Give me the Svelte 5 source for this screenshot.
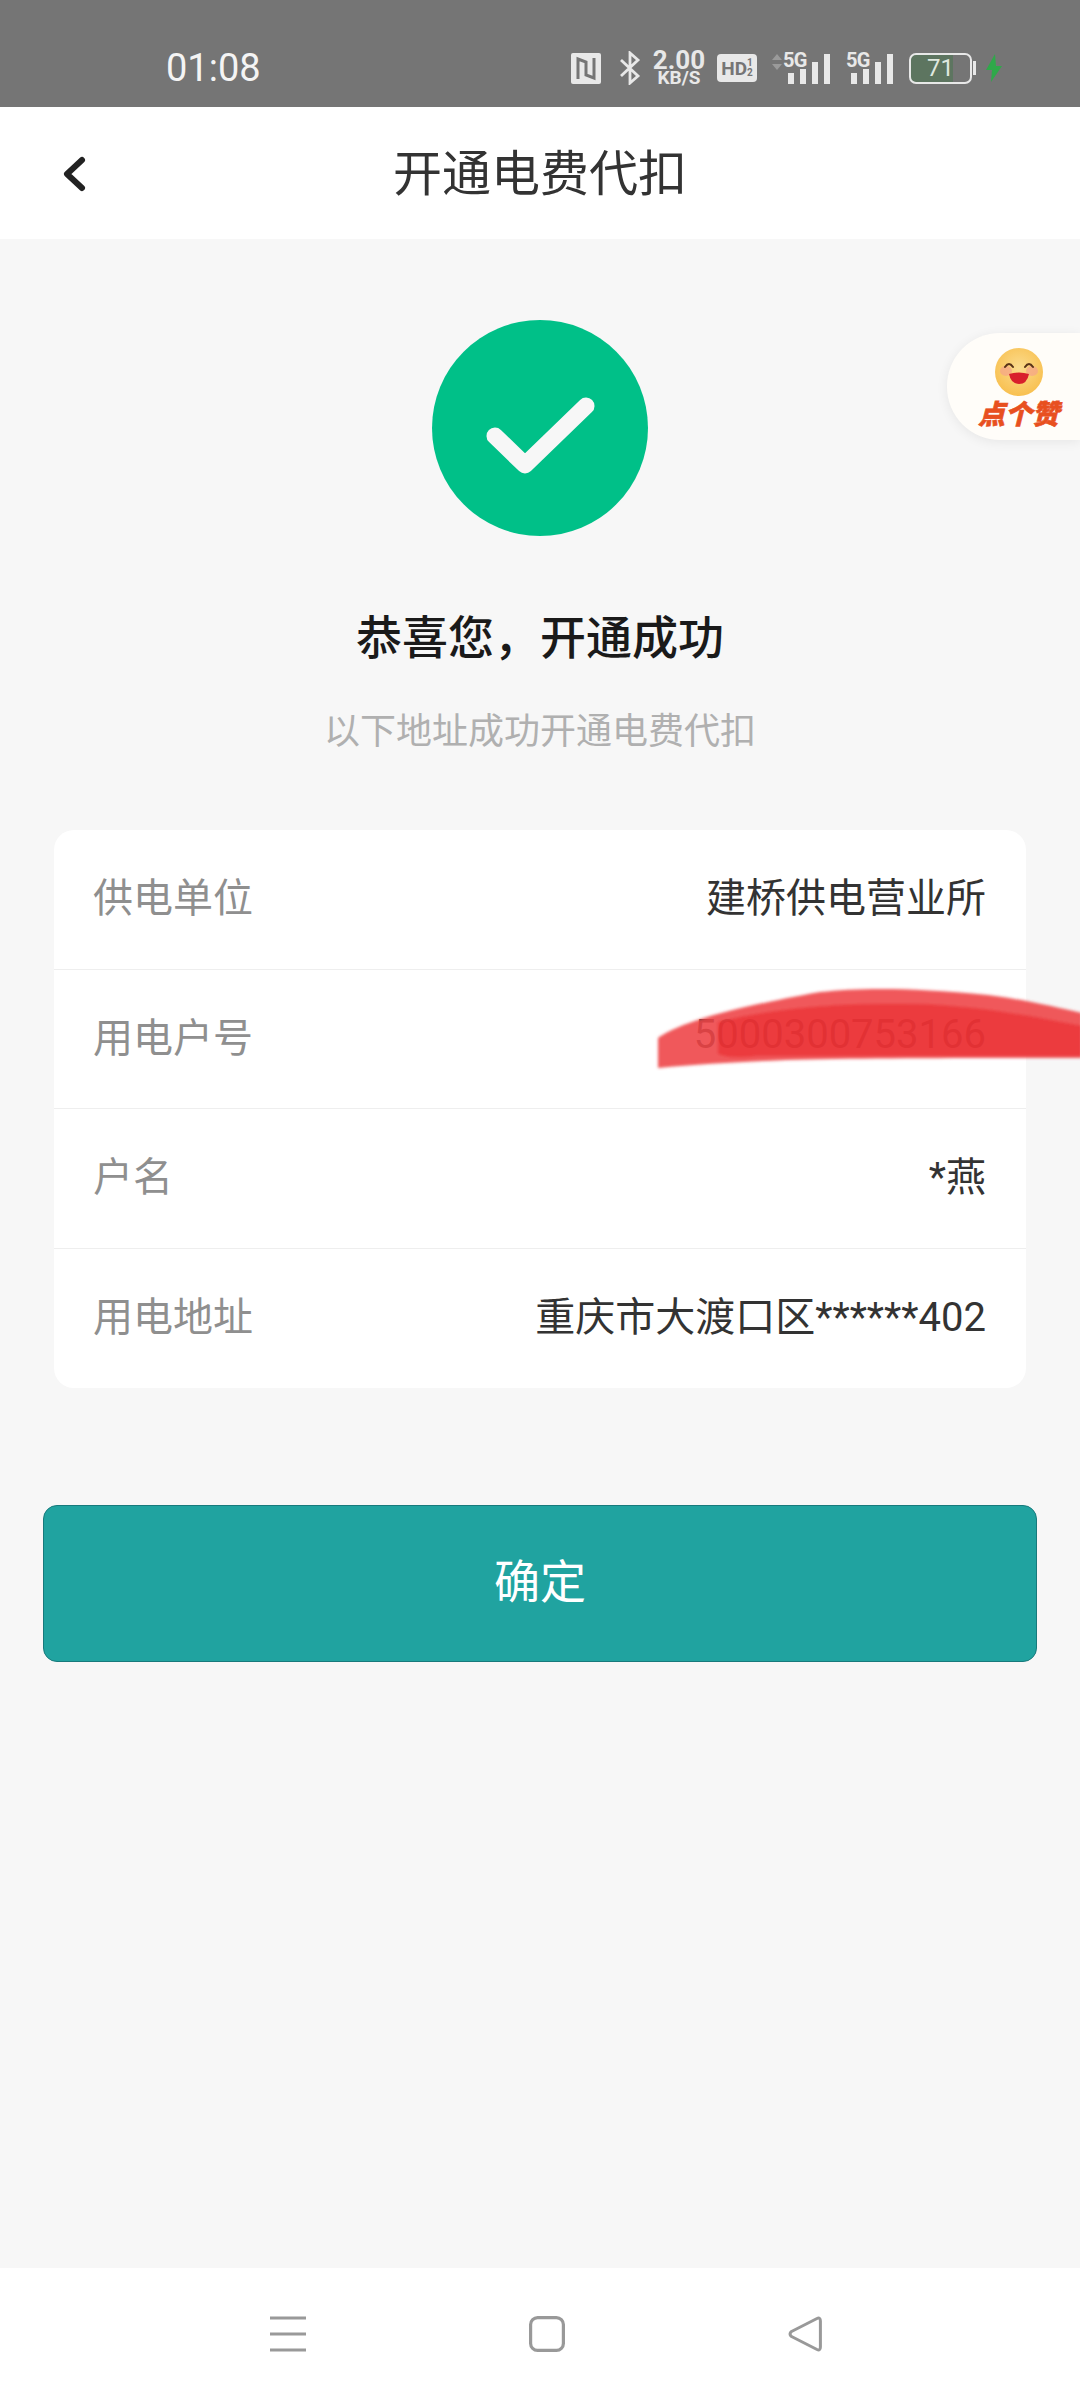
<script>
  const rows = [
    { label: "供电单位", value: "建桥供电营业所" },
    { label: "用电户号", value: "5000300753166", hidden: true },
    { label: "户名", value: "*燕" },
    { label: "用电地址", value: "重庆市大渡口区******402" }
  ];
</script>

<div class="page">
  <div class="status">
    <span class="time">01:08</span>
    <div class="status-icons">
      <svg class="nfc" width="30" height="31" viewBox="0 0 30 31">
        <rect width="30" height="31" rx="2" fill="#e8e8e8" />
        <path d="M7 26V6l8 3v11M23 5v20l-8-3V11" fill="none" stroke="#757575" stroke-width="3" />
      </svg>
      <svg class="bt" width="22" height="34" viewBox="0 0 22 34">
        <path d="M2 9l17 16-8 7V2l8 7L2 25" fill="none" stroke="#e8e8e8" stroke-width="2.8" />
      </svg>
      <div class="speed"><b>2.00</b><span>KB/S</span></div>
      <div class="hd">HD<span class="frac">1<br />2</span></div>
      <div class="signal first">
        <svg class="updown" width="10" height="16" viewBox="0 0 10 16">
          <path d="M5 0l5 6H0zM5 16l5-6H0z" fill="#9a9a9a" />
        </svg>
        <span class="five">5G</span>
        <svg width="43" height="30" viewBox="0 0 43 30">
          <rect x="1" y="19" width="6" height="11" fill="#e8e8e8" />
          <rect x="13" y="15" width="6" height="15" fill="#e8e8e8" />
          <rect x="25" y="8" width="6" height="22" fill="#e8e8e8" />
          <rect x="37" y="0" width="6" height="30" fill="#e8e8e8" />
        </svg>
      </div>
      <div class="signal">
        <span class="five">5G</span>
        <svg width="43" height="30" viewBox="0 0 43 30">
          <rect x="1" y="19" width="6" height="11" fill="#e8e8e8" />
          <rect x="13" y="15" width="6" height="15" fill="#e8e8e8" />
          <rect x="25" y="8" width="6" height="22" fill="#e8e8e8" />
          <rect x="37" y="0" width="6" height="30" fill="#e8e8e8" />
        </svg>
      </div>
      <div class="battery"><span class="level">71</span></div>
      <span class="nub"></span>
      <svg class="bolt" width="18" height="28" viewBox="0 0 18 28">
        <path d="M10 0L1 16h6l-1 12 11-16h-6z" fill="#2fa84a" />
      </svg>
    </div>
  </div>

  <header class="bar">
    <svg class="back" width="26" height="40" viewBox="0 0 26 40">
      <path d="M21 6L6 20l15 14" fill="none" stroke="#222" stroke-width="6" stroke-linecap="round" stroke-linejoin="round" />
    </svg>
    <h1>开通电费代扣</h1>
  </header>

  <main class="content">
    <div class="like">
      <svg width="48" height="48" viewBox="0 0 48 48">
        <defs>
          <radialGradient id="face" cx="50%" cy="42%" r="60%">
            <stop offset="0" stop-color="#fbdc8e" />
            <stop offset="1" stop-color="#f8bf4e" />
          </radialGradient>
        </defs>
        <circle cx="24" cy="24" r="24" fill="url(#face)" />
        <ellipse cx="11" cy="23" rx="6" ry="5" fill="#f5a48a" opacity="0.7" />
        <ellipse cx="37" cy="23" rx="6" ry="5" fill="#f5a48a" opacity="0.7" />
        <path d="M10 19q4-6 8 0M30 19q4-6 8 0" fill="none" stroke="#5a3318" stroke-width="2" stroke-linecap="round" />
        <path d="M14 26q10-3 20 0q-2 10-10 10t-10-10z" fill="#d8202c" />
      </svg>
      <span>点个赞</span>
    </div>

    <div class="tick">
      <svg width="216" height="216" viewBox="0 0 216 216">
        <circle cx="108" cy="108" r="108" fill="#00c088" />
        <path d="M63 116l30 29 61-59" fill="none" stroke="#f7f7f7" stroke-width="17" stroke-linecap="round" stroke-linejoin="round" />
      </svg>
    </div>

    <h2>恭喜您，开通成功</h2>
    <p class="sub">以下地址成功开通电费代扣</p>

    <section class="card">
      {#each rows as row}
        <div class="row">
          <span class="label">{row.label}</span>
          <span class="value" class:hidden={row.hidden}>{row.value}</span>
        </div>
      {/each}
      <svg class="scribble" width="422" height="84" viewBox="0 0 422 84">
        <defs>
          <filter id="soft" x="-5%" y="-10%" width="110%" height="120%">
            <feGaussianBlur stdDeviation="1.4" />
          </filter>
        </defs>
        <g filter="url(#soft)">
          <path d="M0 50C20 36 62 22 162 4 200 0 250-1 330 7 370 12 400 20 424 25V70C300 70 200 70 129 72 80 74 40 76 0 80Z" fill="#ee4244" opacity="0.88" />
          <path d="M60 34C110 22 170 14 260 16 330 18 390 32 424 38V68C300 68 200 68 100 68 80 70 70 70 60 66Z" fill="#ea2426" opacity="0.55" />
        </g>
      </svg>
    </section>

    <button class="confirm"><span>确定</span></button>
  </main>

  <nav class="nav">
    <svg width="36" height="36" viewBox="0 0 36 36">
      <path d="M0 2h36M0 18h36M0 34h36" stroke="#999" stroke-width="3.2" fill="none" />
    </svg>
    <svg width="36" height="36" viewBox="0 0 36 36">
      <rect x="1.6" y="1.6" width="32.8" height="32.8" rx="7" fill="none" stroke="#999" stroke-width="3.2" />
    </svg>
    <svg width="34" height="36" viewBox="0 0 34 36">
      <path d="M29 2.500Q32.400 1 32.400 5V31Q32.400 35 29 33.500L3.500 20.500Q0.500 18 3.500 15.500Z" fill="none" stroke="#999" stroke-width="3" stroke-linejoin="round" />
    </svg>
  </nav>
</div>

<style>
  :global(body) {
    margin: 0;
    background: #f7f7f7;
  }

  .page {
    width: 1080px;
    height: 2400px;
    display: flex;
    flex-direction: column;
    font-family: "Noto Sans CJK SC", "Liberation Sans", sans-serif;
    overflow: hidden;
  }

  .status {
    height: 107px;
    flex: none;
    background: #757575;
    display: flex;
    align-items: center;
    justify-content: space-between;
    padding: 29px 77px 0 166px;
    box-sizing: border-box;
    color: #f4f4f4;
  }

  .time {
    font-family: Roboto, "Liberation Sans", sans-serif;
    font-size: 38px;
    line-height: 42px;
  }

  .status-icons {
    display: flex;
    align-items: center;
    height: 40px;
    color: #e8e8e8;
    font-family: Roboto, "Liberation Sans", sans-serif;
  }

  .bt {
    margin-left: 18px;
  }

  .speed {
    display: flex;
    flex-direction: column;
    align-items: center;
    margin-left: 12px;
    width: 52px;
    line-height: 20px;
  }

  .speed b {
    font-weight: 700;
    font-size: 26px;
    line-height: 19px;
  }

  .speed span {
    font-size: 19px;
    font-weight: 700;
    line-height: 15px;
  }

  .hd {
    display: flex;
    align-items: center;
    justify-content: center;
    margin-left: 12px;
    width: 40px;
    height: 28px;
    border-radius: 4px;
    background: #e8e8e8;
    color: #757575;
    font-size: 19px;
    font-weight: 700;
  }

  .frac {
    font-size: 10px;
    line-height: 10px;
    text-align: center;
  }

  .signal {
    position: relative;
    display: flex;
    align-items: flex-end;
    margin-left: 20px;
    height: 30px;
    margin-top: 2px;
  }

  .signal.first {
    margin-left: 15px;
  }

  .updown {
    align-self: flex-start;
    margin-right: 5px;
  }

  .five {
    position: absolute;
    right: 23px;
    top: -3px;
    font-size: 20px;
    font-weight: 700;
    line-height: 18px;
    letter-spacing: -0.5px;
  }

  .battery {
    margin-left: 16px;
    width: 63px;
    height: 31px;
    box-sizing: border-box;
    border: 2px solid #e8e8e8;
    border-radius: 7px;
    display: flex;
    align-items: center;
    justify-content: center;
    background: linear-gradient(90deg, #5d7560 0 71%, transparent 71%);
  }

  .level {
    font-size: 24px;
    line-height: 27px;
    color: #dfe8df;
  }

  .nub {
    width: 3px;
    height: 14px;
    margin-left: 1px;
    background: #e8e8e8;
  }

  .bolt {
    margin-left: 9px;
  }

  .bar {
    height: 132px;
    flex: none;
    background: #fff;
    display: flex;
    align-items: center;
    justify-content: center;
    position: relative;
    padding-bottom: 6px;
    box-sizing: border-box;
  }

  .back {
    position: absolute;
    left: 61px;
    top: 47px;
  }

  h1 {
    margin: 0;
    font-size: 49px;
    font-weight: 400;
    color: #333;
    line-height: 66px;
  }

  .content {
    flex: 1;
    position: relative;
    display: flex;
    flex-direction: column;
    align-items: center;
    padding-top: 81px;
  }

  .like {
    position: absolute;
    right: 0;
    top: 94px;
    width: 133px;
    height: 107px;
    box-sizing: border-box;
    padding: 15px 0 0 48px;
    border-radius: 53px 0 0 53px;
    background: #fffdf9;
    box-shadow: 0 2px 12px rgba(0, 0, 0, 0.07);
    display: flex;
    flex-direction: column;
    align-items: flex-start;
  }

  .like span {
    margin-left: -17px;
    font-size: 27px;
    line-height: 30px;
    margin-top: 2px;
    font-weight: 900;
    font-style: italic;
    color: #e8501f;
    -webkit-text-stroke: 0.6px #e8501f;
    white-space: nowrap;
  }

  .tick {
    height: 216px;
  }

  .tick svg {
    display: block;
  }

  h2 {
    margin: 66px 0 0;
    font-size: 46px;
    line-height: 64px;
    font-weight: 500;
    color: #1a1a1a;
  }

  .sub {
    margin: 37px 0 0;
    font-size: 36px;
    line-height: 50px;
    color: #b0b0b0;
  }

  .card {
    position: relative;
    margin-top: 77px;
    width: 972px;
    background: #fff;
    border-radius: 20px;
  }

  .row {
    height: 139.5px;
    display: flex;
    align-items: center;
    justify-content: space-between;
    padding: 0 40px 8px 39px;
    box-sizing: border-box;
    border-bottom: 1px solid #eeeeee;
    font-size: 40px;
  }

  .row:last-of-type {
    border-bottom: none;
  }

  .label {
    color: #8f8f8f;
  }

  .value {
    color: #333;
    font-family: Roboto, "Noto Sans CJK SC", sans-serif;
    font-size: 40px;
  }

  .value.hidden {
    color: #444;
  }

  .scribble {
    position: absolute;
    left: 604px;
    top: 158px;
    overflow: visible;
  }

  .confirm {
    margin-top: 117px;
    width: 994px;
    height: 157px;
    background: #20a3a0;
    border: 1.5px solid #177a7c;
    border-radius: 14px;
    color: #fff;
    font-family: inherit;
    font-size: 46px;
    padding: 0 0 12px;
  }

  .nav {
    height: 132px;
    flex: none;
    background: #fff;
    display: flex;
    align-items: center;
    justify-content: space-between;
    padding: 0 258px 0 270px;
    box-sizing: border-box;
  }
</style>
